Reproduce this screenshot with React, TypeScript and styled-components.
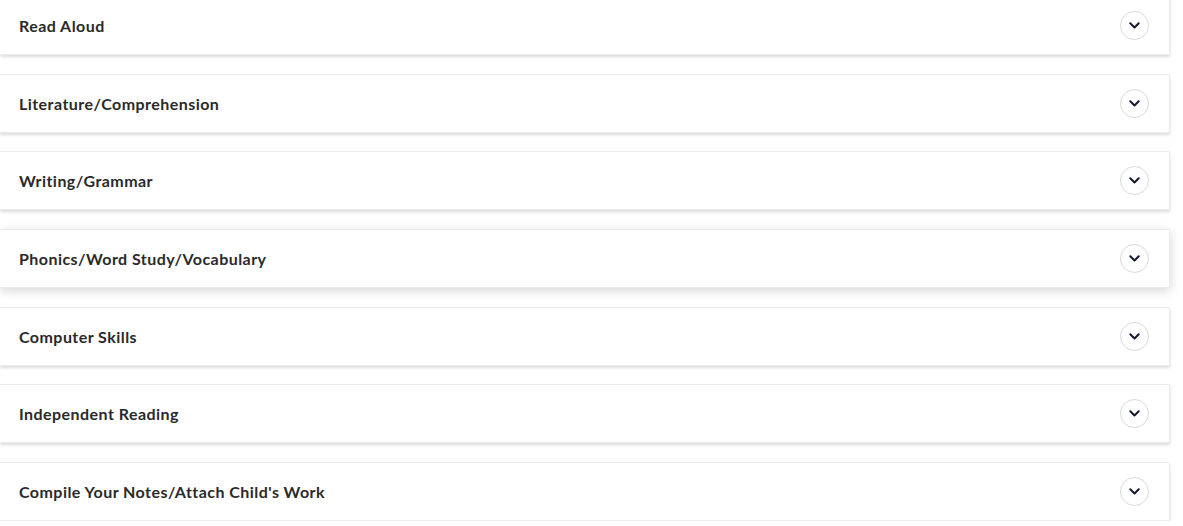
import React, { useState } from 'react';
import styled, { createGlobalStyle } from 'styled-components';

const GlobalStyle = createGlobalStyle`
  html, body {
    margin: 0;
    padding: 0;
    background: #ffffff;
  }
  body {
    font-family: Lato, "Open Sans", "Liberation Sans", sans-serif;
    overflow: hidden;
  }
`;

const sections = [
  'Read Aloud',
  'Literature/Comprehension',
  'Writing/Grammar',
  'Phonics/Word Study/Vocabulary',
  'Computer Skills',
  'Independent Reading',
  "Compile Your Notes/Attach Child's Work",
];

const List = styled.div`
  width: 1170px;
  margin-top: -4px;
  display: flex;
  flex-direction: column;
  gap: 18.7px;
`;

const Panel = styled.div<{ $raised: boolean }>`
  box-sizing: border-box;
  height: 59px;
  background: #fff;
  border: 1px solid #ececec;
  border-left: none;
  box-shadow: ${p => p.$raised
    ? '0 3px 10px rgba(0, 0, 0, 0.16)'
    : '0 2px 3px rgba(0, 0, 0, 0.14)'};
  display: flex;
  align-items: center;
  justify-content: space-between;
  padding: 0 20px 0 19px;
  cursor: pointer;
`;

const Title = styled.span`
  font-size: 16px;
  font-weight: 700;
  color: #2a2a2a;
  letter-spacing: 0.45px;
`;

const Toggle = styled.span`
  box-sizing: border-box;
  width: 29px;
  height: 29px;
  border-radius: 50%;
  border: 1px solid #dadada;
  display: flex;
  align-items: center;
  justify-content: center;
  color: #141a2e;
`;

const Chevron = () => (
  <svg width="11" height="7" viewBox="0 0 11 7" fill="none">
    <path d="M1.3 1.3 L5.5 5.5 L9.7 1.3" stroke="currentColor" strokeWidth="2" strokeLinecap="round" strokeLinejoin="round" />
  </svg>
);

export default function App() {
  const [hovered] = useState(3);
  return (
    <>
      <GlobalStyle />
      <List>
        {sections.map((s, i) => (
          <Panel key={s} $raised={i === hovered}>
            <Title>{s}</Title>
            <Toggle>
              <Chevron />
            </Toggle>
          </Panel>
        ))}
      </List>
    </>
  );
}
